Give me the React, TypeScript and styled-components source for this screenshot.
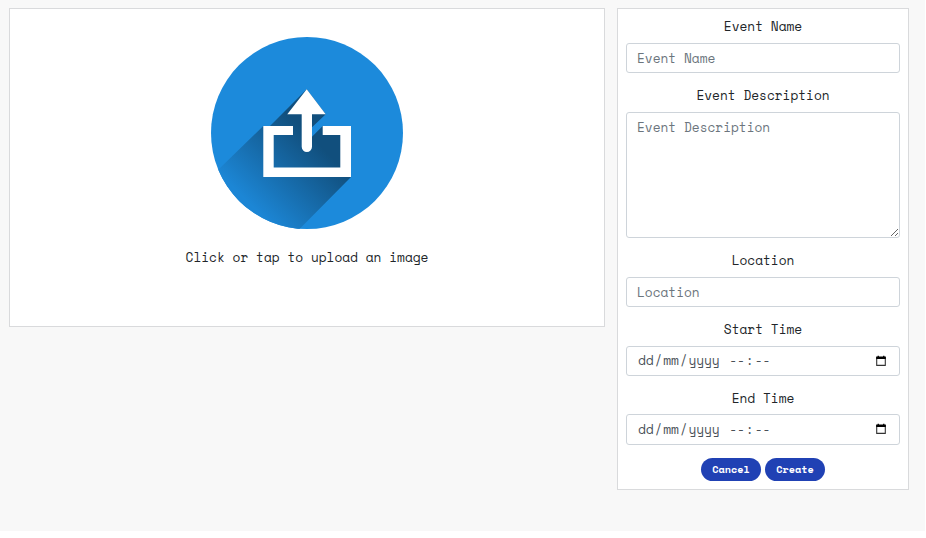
import React from "react";
import styled, { createGlobalStyle } from "styled-components";

const GlobalStyle = createGlobalStyle`
  *, *::before, *::after { box-sizing: border-box; }
  html { background: #fff; }
  body {
    margin: 0;
    overflow: hidden;
    font-family: "Space Mono", "Liberation Mono", monospace;
    font-size: 12.8px;
    line-height: 19.2px;
    color: #212529;
  }
`;

const Page = styled.main`
  display: flex;
  align-items: flex-start;
  gap: 12px;
  width: 925px;
  height: 531px;
  padding: 8px 0 0 9px;
  background: #f8f8f8;
`;

const Card = styled.section`
  background: #fff;
  border: 1px solid #d9dadc;
`;

const UploadCard = styled(Card)`
  display: flex;
  flex-direction: column;
  align-items: center;
  gap: 19px;
  width: 596px;
  height: 319px;
  padding-top: 28px;
  cursor: pointer;
`;

const UploadArt = styled.svg`
  display: block;
  width: 192px;
  height: 192px;
`;

const UploadText = styled.p`
  margin: 0;
`;

const FormCard = styled(Card)`
  width: 292px;
  height: 482px;
  padding: 8.4px 8px 0;
`;

const Field = styled.div`
  display: flex;
  flex-direction: column;
  gap: 6.4px;
  margin-bottom: 12.8px;
`;

const Label = styled.label`
  text-align: center;
`;

const Input = styled.input`
  display: block;
  width: 100%;
  height: 30.4px;
  margin: 0;
  padding: 0.4px 10px 0;
  border: 1px solid #ced4da;
  border-radius: 3px;
  background: #fff;
  font: inherit;
  letter-spacing: inherit;
  color: #495057;
  outline: none;
  &::placeholder { color: #6c757d; opacity: 1; }
`;

const TextArea = styled(Input).attrs({ as: "textarea" })`
  height: 126.6px;
  padding: 5px 10px;
  resize: vertical;
`;

const DateBox = styled.div`
  display: flex;
  align-items: center;
  height: 30.4px;
  padding: 0 12px 0.4px 10px;
  border: 1px solid #ced4da;
  border-radius: 3px;
  color: #495057;
  letter-spacing: -0.08px;
`;

const DatePart = styled.span`
  padding: 0 1px;
`;

const Separator = styled.span`
  white-space: pre;
`;

const CalendarIcon = styled.svg`
  width: 12px;
  height: 12px;
  margin-left: auto;
`;

const Actions = styled.div`
  display: flex;
  justify-content: center;
  gap: 4px;
  padding-top: 0.6px;
`;

const Button = styled.button`
  width: 60px;
  height: 23px;
  padding: 0;
  border: 0;
  border-radius: 12px;
  background: #2041b4;
  color: #fff;
  font: bold 10.24px/23px "Space Mono", "Liberation Mono", monospace;
  cursor: pointer;
`;

function DateField({ label }: { label: string }) {
  return (
    <Field>
      <Label>{label}</Label>
      <DateBox>
        <DatePart>dd</DatePart>
        <Separator>/</Separator>
        <DatePart>mm</DatePart>
        <Separator>/</Separator>
        <DatePart>yyyy</DatePart>
        <Separator> </Separator>
        <DatePart>--</DatePart>
        <Separator>:</Separator>
        <DatePart>--</DatePart>
        <CalendarIcon viewBox="0 0 12 12">
          <path d="M1.7 2.5h8.6v7.9H1.7z" fill="none" stroke="#333" strokeWidth="1.1" strokeLinejoin="round" />
          <path d="M1.2 1.6h9.6v2.3H1.2zM2.6.7h1.3v1.5H2.6zM8.1.7h1.3v1.5H8.1z" fill="#000" />
        </CalendarIcon>
      </DateBox>
    </Field>
  );
}

function UploadIcon() {
  return (
    <UploadArt viewBox="0 0 192 192">
      <defs>
        <linearGradient id="shade" gradientUnits="userSpaceOnUse" x1="96" y1="96" x2="32" y2="160">
          <stop offset="0" stopColor="#114f7d" />
          <stop offset="1" stopColor="#1c86d5" />
        </linearGradient>
        <clipPath id="disc">
          <circle cx="96" cy="96" r="96" />
        </clipPath>
      </defs>
      <circle cx="96" cy="96" r="96" fill="#1c8adb" />
      <g clipPath="url(#disc)" fill="url(#shade)">
        <path d="M52.3 89L-40 178.5V240H40L88.5 192 140 140V89H111.7L96 104.7V95L114.7 77.3 95.7 52.3 59 89z" />
      </g>
      <path
        fill="#fff"
        d="M82 89H52.3V140H140V89H111.7V98H129.3V130.4H62.7V98H82z"
      />
      <path
        fill="#fff"
        d="M95.7 52.3L114.7 77.3H101V109.8a5.15 5.15 0 0 1-10.3 0V77.3H76.3z"
      />
    </UploadArt>
  );
}

export default function App() {
  return (
    <>
      <GlobalStyle />
      <Page>
        <UploadCard>
          <UploadIcon />
          <UploadText>Click or tap to upload an image</UploadText>
        </UploadCard>
        <FormCard>
          <Field>
            <Label htmlFor="name">Event Name</Label>
            <Input id="name" placeholder="Event Name" />
          </Field>
          <Field>
            <Label htmlFor="description">Event Description</Label>
            <TextArea id="description" placeholder="Event Description" />
          </Field>
          <Field>
            <Label htmlFor="location">Location</Label>
            <Input id="location" placeholder="Location" />
          </Field>
          <DateField label="Start Time" />
          <DateField label="End Time" />
          <Actions>
            <Button>Cancel</Button>
            <Button>Create</Button>
          </Actions>
        </FormCard>
      </Page>
    </>
  );
}
